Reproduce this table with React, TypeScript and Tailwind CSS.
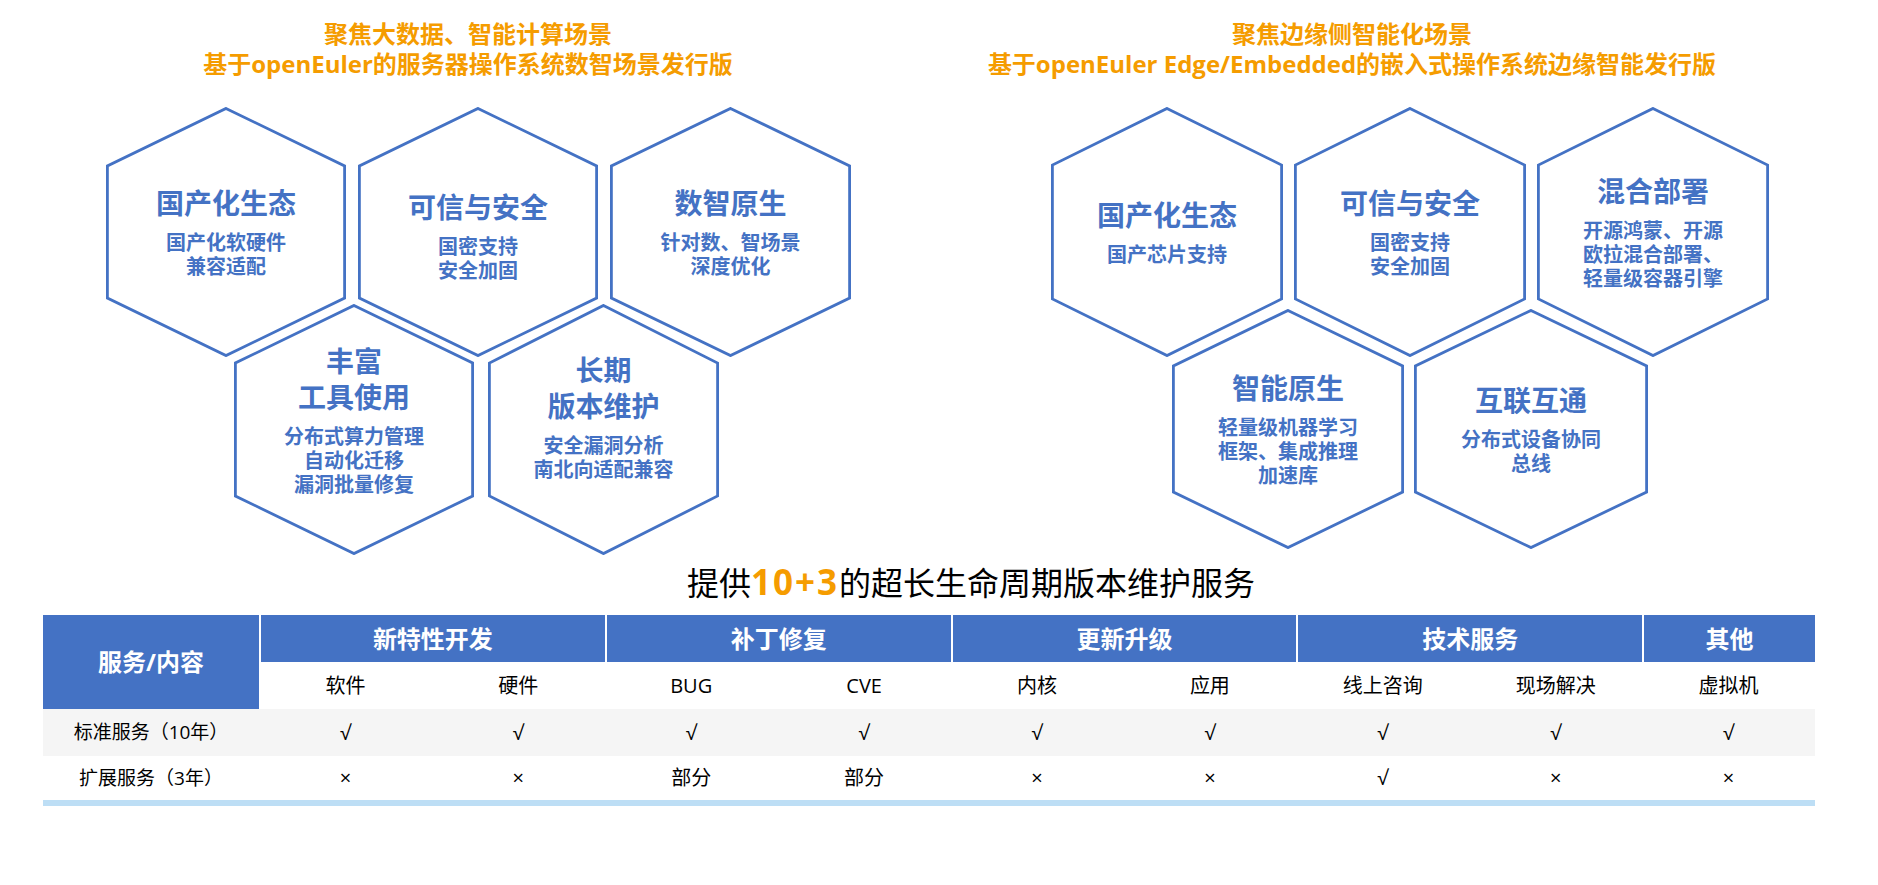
type HexItem = {
  title: string[];
  lines: string[];
  box: string;
  w: number;
  h: number;
  s: number;
  nudge?: string;
};

const leftTop: HexItem[] = [
  { title: ["国产化生态"], lines: ["国产化软硬件", "兼容适配"], box: "w-[240px] h-[250px]", w: 240, h: 250, s: 59 },
  { title: ["可信与安全"], lines: ["国密支持", "安全加固"], box: "w-[240px] h-[250px]", w: 240, h: 250, s: 59, nudge: "pt-[8px]" },
  { title: ["数智原生"], lines: ["针对数、智场景", "深度优化"], box: "w-[241px] h-[250px]", w: 241, h: 250, s: 59 },
];

const leftBottom: HexItem[] = [
  {
    title: ["丰富", "工具使用"],
    lines: ["分布式算力管理", "自动化迁移", "漏洞批量修复"],
    box: "w-[240px] h-[251px]",
    w: 240,
    h: 251,
    s: 59,
    nudge: "pb-[19px]",
  },
  {
    title: ["长期", "版本维护"],
    lines: ["安全漏洞分析", "南北向适配兼容"],
    box: "w-[231px] h-[251px]",
    w: 231,
    h: 251,
    s: 59,
    nudge: "pb-[25px]",
  },
];

const rightTop: HexItem[] = [
  { title: ["国产化生态"], lines: ["国产芯片支持"], box: "w-[232px] h-[250px]", w: 232, h: 250, s: 58 },
  { title: ["可信与安全"], lines: ["国密支持", "安全加固"], box: "w-[232px] h-[250px]", w: 232, h: 250, s: 58 },
  {
    title: ["混合部署"],
    lines: ["开源鸿蒙、开源", "欧拉混合部署、", "轻量级容器引擎"],
    box: "w-[232px] h-[250px]",
    w: 232,
    h: 250,
    s: 58,
  },
];

const rightBottom: HexItem[] = [
  {
    title: ["智能原生"],
    lines: ["轻量级机器学习", "框架、集成推理", "加速库"],
    box: "w-[232px] h-[240px]",
    w: 232,
    h: 240,
    s: 57,
  },
  { title: ["互联互通"], lines: ["分布式设备协同", "总线"], box: "w-[234px] h-[240px]", w: 234, h: 240, s: 57 },
];

const groups = [
  { name: "新特性开发", span: "col-span-2", subs: ["软件", "硬件"] },
  { name: "补丁修复", span: "col-span-2", subs: ["BUG", "CVE"] },
  { name: "更新升级", span: "col-span-2", subs: ["内核", "应用"] },
  { name: "技术服务", span: "col-span-2", subs: ["线上咨询", "现场解决"] },
  { name: "其他", span: "col-span-1", subs: ["虚拟机"] },
];

const rows = [
  { label: "标准服务（10年）", cells: ["√", "√", "√", "√", "√", "√", "√", "√", "√"], bg: "bg-[#f5f5f5]" },
  { label: "扩展服务（3年）", cells: ["×", "×", "部分", "部分", "×", "×", "√", "×", "×"], bg: "bg-white" },
];

function Hexagon({ item }: { item: HexItem }) {
  const { w, h, s } = item;
  const pts = `${w / 2},1.4 ${w - 1.4},${s} ${w - 1.4},${h - s} ${w / 2},${h - 1.4} 1.4,${h - s} 1.4,${s}`;
  return (
    <div
      className={`relative flex shrink-0 flex-col items-center justify-center text-center text-[#4472c4] ${item.box} ${item.nudge ?? ""}`}
    >
      <svg className="absolute inset-0" width={w} height={h} viewBox={`0 0 ${w} ${h}`}>
        <polygon points={pts} fill="none" stroke="#4472c4" strokeWidth={2.8} />
      </svg>
      <div className="relative">
        {item.title.map((t) => (
          <div key={t} className="text-[28px] font-bold leading-[36px]">
            {t}
          </div>
        ))}
        <div className="mt-[10px] text-[20px] font-bold leading-[24px]">
          {item.lines.map((l) => (
            <div key={l}>{l}</div>
          ))}
        </div>
      </div>
    </div>
  );
}

const ServiceTable = () => {
  const subs = groups.flatMap((g) => g.subs);
  return (
    <div className="ml-[43px] mt-[12px] w-[1772px]">
      <div className="grid grid-cols-[216px_repeat(9,minmax(0,1fr))] grid-rows-[47px_47px_47px_44px] text-black">
        <div className="row-span-2 flex items-center justify-center bg-[#4472c4] text-[24px] font-bold text-white">
          服务/内容
        </div>
        {groups.map((g) => (
          <div
            key={g.name}
            className={`flex items-center justify-center border-l-2 border-white bg-[#4472c4] text-[24px] font-bold text-white ${g.span}`}
          >
            {g.name}
          </div>
        ))}
        {subs.map((s) => (
          <div key={s} className="flex items-center justify-center bg-white text-[20px]">
            {s}
          </div>
        ))}
        {rows.map((row) => (
          <div key={row.label} className="contents">
            <div className={`flex items-center justify-center text-[19px] ${row.bg}`}>{row.label}</div>
            {row.cells.map((c, i) => (
              <div key={i} className={`flex items-center justify-center text-[20px] ${row.bg}`}>
                {c}
              </div>
            ))}
          </div>
        ))}
      </div>
      <div className="h-[6px] bg-[#bddef5]" />
    </div>
  );
};

export default function App() {
  return (
    <div className="min-h-[885px] w-[1878px] bg-white font-['Open_Sans','Noto_Sans_CJK_SC',sans-serif]">
      <div className="flex h-[555px] items-start">
        <section className="w-[936px] shrink-0">
          <div className="h-[107px] pt-[19px] text-center text-[24px] font-bold leading-[29.5px] text-[#f59c00]">
            <div>聚焦大数据、智能计算场景</div>
            <div>基于openEuler的服务器操作系统数智场景发行版</div>
          </div>
          <div className="ml-[106px] flex gap-[12px]">
            {leftTop.map((h) => (
              <Hexagon key={h.title.join()} item={h} />
            ))}
          </div>
          <div className="ml-[234px] mt-[-53px] flex gap-[14px]">
            {leftBottom.map((h) => (
              <Hexagon key={h.title.join()} item={h} />
            ))}
          </div>
        </section>
        <section className="w-[832px] shrink-0">
          <div className="h-[107px] pt-[19px] text-center text-[24px] font-bold leading-[29.5px] text-[#f59c00]">
            <div>聚焦边缘侧智能化场景</div>
            <div>基于openEuler Edge/Embedded的嵌入式操作系统边缘智能发行版</div>
          </div>
          <div className="ml-[115px] flex gap-[11px]">
            {rightTop.map((h) => (
              <Hexagon key={h.title.join()} item={h} />
            ))}
          </div>
          <div className="ml-[236px] mt-[-48px] flex gap-[10px]">
            {rightBottom.map((h) => (
              <Hexagon key={h.title.join()} item={h} />
            ))}
          </div>
        </section>
      </div>
      <h2 className="mt-[7px] pl-[64px] text-center text-[32px] font-normal leading-[40px] text-black">
        提供<span className="text-[35px] font-bold tracking-[2px] text-[#f59c00]">10+3</span>
        的超长生命周期版本维护服务
      </h2>
      <ServiceTable />
    </div>
  );
}
